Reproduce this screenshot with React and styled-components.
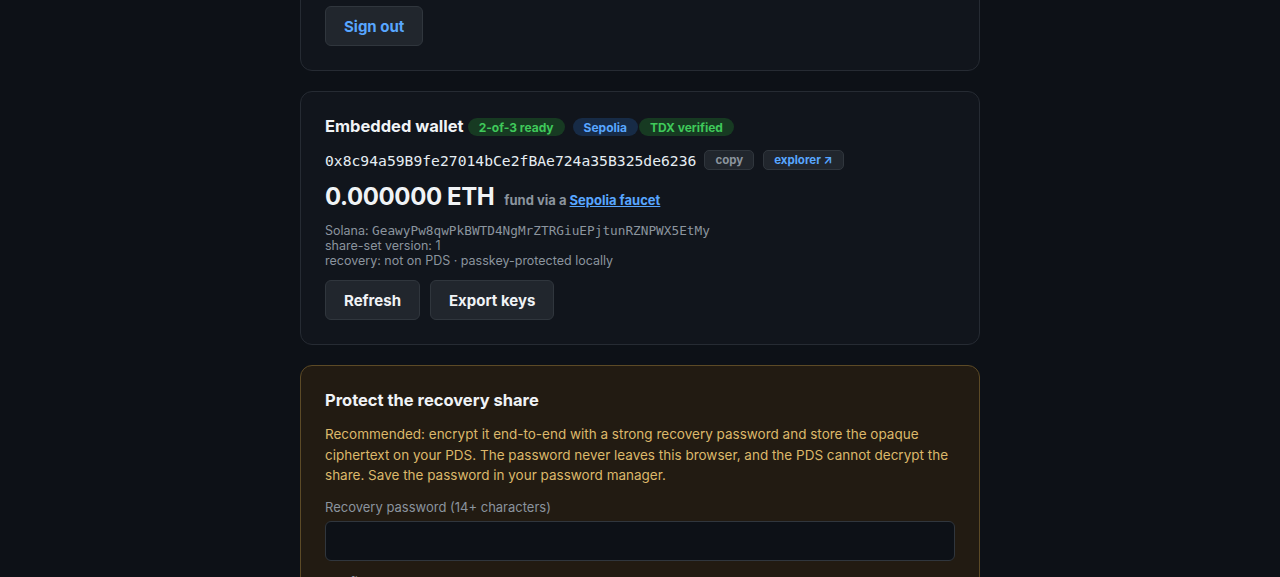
import React from 'react'
import styled, { createGlobalStyle } from 'styled-components'

const GlobalStyle = createGlobalStyle`
  html, body {
    margin: 0;
    background: #0d1117;
    color: #e6edf3;
    font-family: Inter, "Noto Sans", "Liberation Sans", sans-serif;
  }
`

const tones = {
  green: { bg: '#173a22', fg: '#3fc95a' },
  blue: { bg: '#172b46', fg: '#58a6ff' },
}

const App = () => {
  return (
    <>
      <GlobalStyle />
      <Column>
        <Card>
          <Button $tone="link">Sign out</Button>
        </Card>

        <Card>
          <TitleRow>
            <Title>Embedded wallet</Title>
            <Badge $tone="green" $gap={4}>2-of-3 ready</Badge>
            <Badge $tone="blue" $gap={8}>Sepolia</Badge>
            <Badge $tone="green" $gap={1}>TDX verified</Badge>
          </TitleRow>
          <AddressRow>
            <Address>0x8c94a59B9fe27014bCe2fBAe724a35B325de6236</Address>
            <Chip>copy</Chip>
            <Chip $link>explorer ↗</Chip>
          </AddressRow>
          <BalanceRow>
            <Balance>0.000000 ETH</Balance>
            <Fund>
              fund via a <a href="#">Sepolia faucet</a>
            </Fund>
          </BalanceRow>
          <Meta>
            <MetaLine>
              Solana: <Mono>GeawyPw8qwPkBWTD4NgMrZTRGiuEPjtunRZNPWX5EtMy</Mono>
            </MetaLine>
            <MetaLine>share-set version: 1</MetaLine>
            <MetaLine>recovery: not on PDS · passkey-protected locally</MetaLine>
          </Meta>
          <Actions>
            <Button>Refresh</Button>
            <Button>Export keys</Button>
          </Actions>
        </Card>

        <Card $warn>
          <Title>Protect the recovery share</Title>
          <Notice>
            Recommended: encrypt it end-to-end with a strong recovery password and store the opaque
            ciphertext on your PDS. The password never leaves this browser, and the PDS cannot decrypt the
            share. Save the password in your password manager.
          </Notice>
          <Field>
            <Label>Recovery password (14+ characters)</Label>
            <Input type="password" />
          </Field>
          <Field>
            <Label>Confirm password</Label>
            <Input type="password" />
          </Field>
        </Card>
      </Column>
    </>
  )
}

export default App

const Column = styled.main`
  width: 680px;
  margin: -19px auto 0;
  display: flex;
  flex-direction: column;
  gap: 20px;
  padding-bottom: 40px;
`

const Card = styled.section`
  background: ${p => (p.$warn ? '#221b12' : '#11151c')};
  border: 1px solid ${p => (p.$warn ? '#5c4a26' : '#262b33')};
  border-radius: 12px;
  padding: 24px;
`

const Button = styled.button`
  height: 40px;
  padding: 0 18px;
  border-radius: 6px;
  border: 1px solid #30363d;
  background: #21262d;
  color: ${p => (p.$tone === 'link' ? '#58a6ff' : '#f0f3f6')};
  font-family: inherit;
  font-size: 15px;
  font-weight: 700;
  cursor: pointer;
`

const TitleRow = styled.div`
  display: flex;
  align-items: center;
  height: 20px;
`

const Title = styled.h2`
  margin: 0;
  font-size: 16.5px;
  line-height: 20px;
  font-weight: 700;
  color: #f0f3f6;
`

const Badge = styled.span`
  margin-left: ${p => p.$gap}px;
  margin-top: 2px;
  padding: 0 11px;
  height: 18px;
  display: inline-flex;
  align-items: center;
  border-radius: 9px;
  font-size: 12px;
  font-weight: 700;
  background: ${p => tones[p.$tone].bg};
  color: ${p => tones[p.$tone].fg};
`

const AddressRow = styled.div`
  display: flex;
  align-items: center;
  gap: 8px;
  margin-top: 14px;
`

const Address = styled.code`
  font-family: "DejaVu Sans Mono", "Liberation Mono", monospace;
  font-size: 14.7px;
  color: #e6edf3;
`

const Chip = styled.button`
  height: 20px;
  padding: 0 10px;
  border-radius: 5px;
  border: 1px solid #30363d;
  background: #21262d;
  color: ${p => (p.$link ? '#58a6ff' : '#8b949e')};
  font-family: inherit;
  font-size: 11.5px;
  font-weight: 700;
  margin-left: ${p => (p.$link ? '1px' : '0')};
`

const BalanceRow = styled.div`
  display: flex;
  align-items: baseline;
  gap: 10px;
  margin-top: 12px;
`

const Balance = styled.div`
  font-size: 24px;
  font-weight: 700;
  color: #f0f3f6;
  letter-spacing: -0.4px;
`

const Fund = styled.span`
  font-size: 13px;
  font-weight: 700;
  color: #8b949e;

  a {
    color: #58a6ff;
    text-decoration: underline;
  }
`

const Meta = styled.div`
  margin-top: 12px;
  font-size: 12.5px;
  color: #8b949e;
`

const MetaLine = styled.div`
  height: 15px;
  line-height: 15px;
  white-space: nowrap;
`

const Mono = styled.span`
  font-family: "DejaVu Sans Mono", "Liberation Mono", monospace;
  font-size: 12.75px;
  line-height: 15px;
`

const Actions = styled.div`
  display: flex;
  gap: 10px;
  margin-top: 12px;
`

const Notice = styled.p`
  margin: 14px 0 0;
  font-size: 13.5px;
  line-height: 20.5px;
  color: #dcb86a;
`

const Field = styled.label`
  display: flex;
  flex-direction: column;
  gap: 6px;
  margin-top: 13px;
`

const Label = styled.span`
  font-size: 13px;
  color: #8b949e;
`

const Input = styled.input`
  height: 40px;
  box-sizing: border-box;
  background: #0d1117;
  border: 1px solid #30363d;
  border-radius: 6px;
  color: #e6edf3;
  padding: 0 12px;
  font-size: 14px;
`
